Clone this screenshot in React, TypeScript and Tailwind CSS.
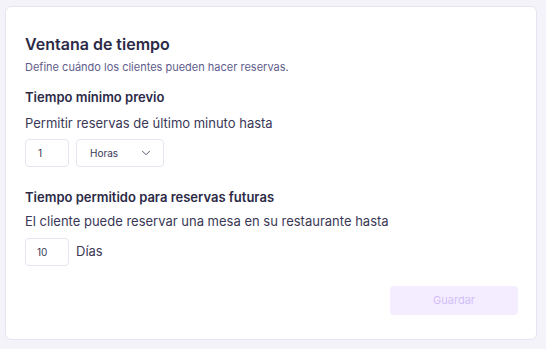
import React from 'react';

const ChevronDown = () => (
  <svg width="14" height="14" viewBox="0 0 24 24" fill="none" stroke="#4b4a63" strokeWidth="1.6" strokeLinecap="round" strokeLinejoin="round">
    <path d="M6 9l6 6 6-6" />
  </svg>
);

const App: React.FC = () => {
  return (
    <div className="min-h-[349px] w-[546px] bg-[#f4f3f9] pl-[5px] pr-[9px] pt-[6px] pb-[9px]" style={{ fontFamily: 'Inter, "Noto Sans", sans-serif' }}>
      <div className="flex h-[334px] flex-col rounded-[6px] border border-[#e6e4f0] bg-white pl-[19px] pr-[18px] pt-[27px]">
        <h2 className="text-[16px] font-semibold leading-[20px] text-[#2c2a47]">Ventana de tiempo</h2>
        <p className="mt-[6px] text-[11px] leading-[14px] text-[#5f5d8c]">Define cuándo los clientes pueden hacer reservas.</p>

        <h3 className="mt-[15px] text-[13px] font-semibold leading-[16px] text-[#2c2a47]">Tiempo mínimo previo</h3>
        <p className="mt-[10px] text-[13px] leading-[16px] text-[#3a3856]">Permitir reservas de último minuto hasta</p>
        <div className="mt-[8px] flex gap-[7px]">
          <div className="flex h-[28px] w-[44px] items-center rounded-[4px] border border-[#e6e4f0] pl-[12px] text-[10px] text-[#3a3856]">1</div>
          <div className="flex h-[28px] w-[88px] items-center justify-between rounded-[4px] border border-[#e6e4f0] pl-[13px] pr-[10px] text-[10px] text-[#3a3856]">
            <span>Horas</span>
            <ChevronDown />
          </div>
        </div>

        <h3 className="mt-[22px] text-[13px] font-semibold leading-[16px] text-[#2c2a47]">Tiempo permitido para reservas futuras</h3>
        <p className="mt-[8px] text-[13px] leading-[16px] text-[#3a3856]">El cliente puede reservar una mesa en su restaurante hasta</p>
        <div className="mt-[9px] flex items-center gap-[7px]">
          <div className="flex h-[28px] w-[44px] items-center rounded-[4px] border border-[#e6e4f0] pl-[11px] text-[10px] text-[#3a3856]">10</div>
          <span className="text-[13px] text-[#3a3856]">Días</span>
        </div>

        <div className="mt-[20px] flex justify-end">
          <button className="h-[29px] w-[128px] rounded-[4px] bg-[#f4edff] text-[11px] text-[#d2bff9]">Guardar</button>
        </div>
      </div>
    </div>
  );
};

export default App;
